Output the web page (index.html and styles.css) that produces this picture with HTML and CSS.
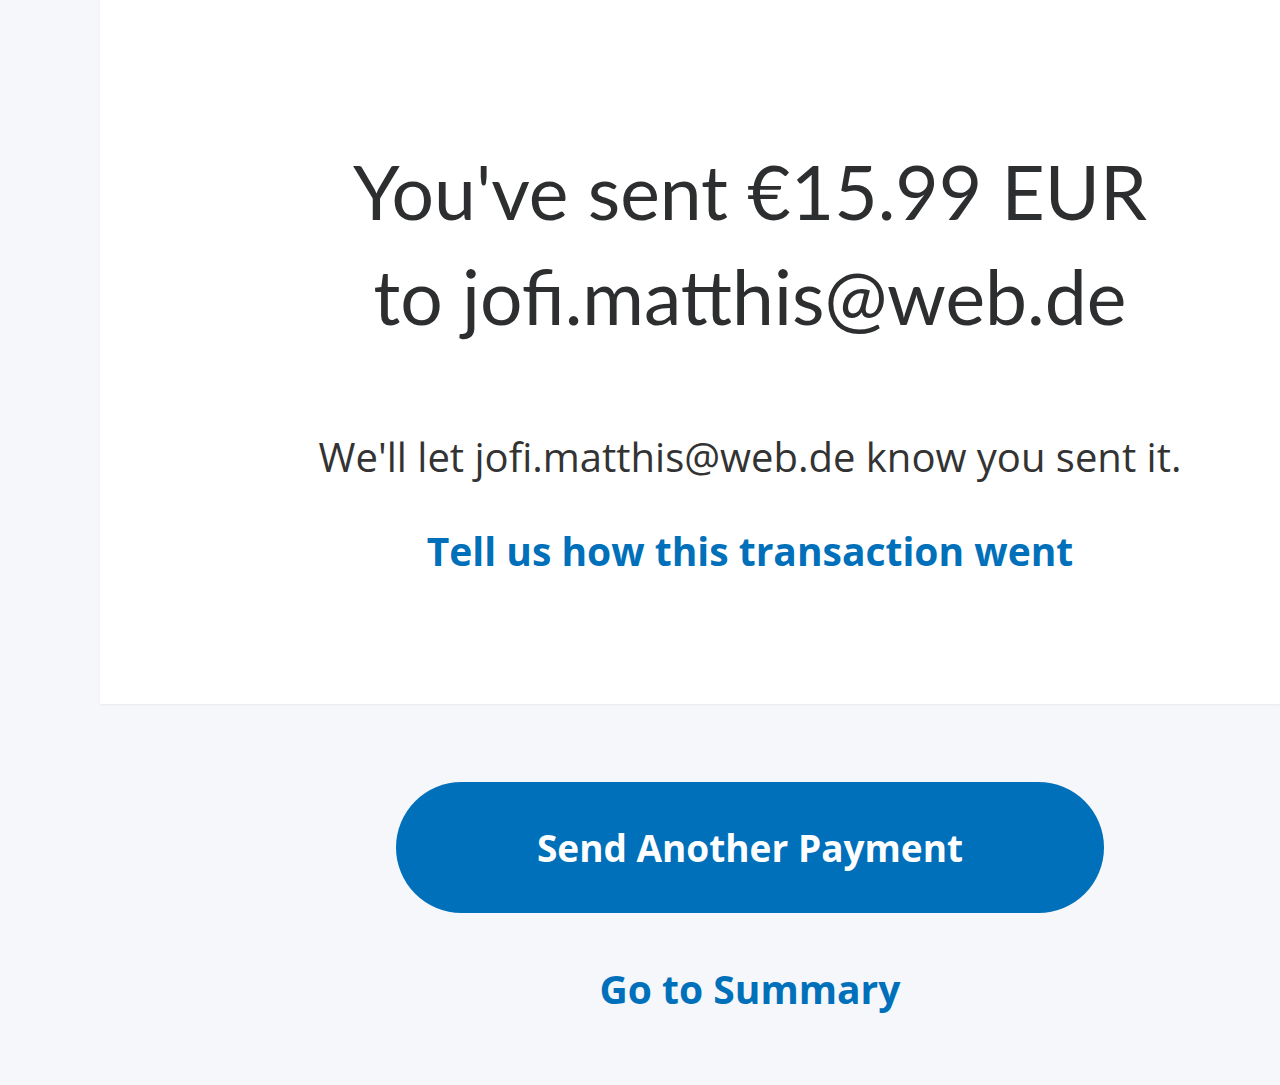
FILE: index.html
```html
<!DOCTYPE html>
<html lang="en">
<head>
<meta charset="utf-8">
<title>Payment sent</title>
<link rel="stylesheet" href="styles.css">
</head>
<body>
<main class="page">
  <section class="card">
    <h1 class="title">You've sent €15.99 EUR<br>to jofi.matthis@web.de</h1>
    <p class="note">We'll let jofi.matthis@web.de know you sent it.</p>
    <a class="link feedback" href="#">Tell us how this transaction went</a>
  </section>
  <div class="actions">
    <a class="btn" href="#">Send Another Payment</a>
    <a class="link summary" href="#">Go to Summary</a>
  </div>
</main>
</body>
</html>
```
FILE: styles.css
```css
html, body {
  margin: 0;
  padding: 0;
  background: #f5f7fa;
  overflow: hidden;
}
body {
  font-family: Lato, "Open Sans", sans-serif;
  color: #2c2e2f;
  width: 1280px;
  height: 1085px;
}
.page {
  margin-left: 100px;
}
.card {
  background: #ffffff;
  box-shadow: 0 1px 2px rgba(0,0,0,0.06);
  padding: 139px 0 128px 120px;
  display: flex;
  flex-direction: column;
  align-items: center;
  text-align: center;
}
.title {
  margin: 0;
  font-weight: 400;
  font-size: 75px;
  line-height: 105px;
  color: #2c2e2f;
}
.note {
  margin: 83px 0 0;
  font-family: "Open Sans", sans-serif;
  font-size: 40px;
  line-height: 50px;
  color: #333333;
}
.link {
  font-family: "Open Sans", sans-serif;
  font-weight: 700;
  color: #0070ba;
  text-decoration: none;
}
.feedback {
  margin-top: 44px;
  font-size: 39px;
  line-height: 50px;
}
.actions {
  display: flex;
  flex-direction: column;
  align-items: center;
  padding: 78px 0 0 120px;
}
.btn {
  width: 708px;
  height: 131px;
  border-radius: 66px;
  background: #0070ba;
  color: #ffffff;
  font-family: "Open Sans", sans-serif;
  font-weight: 700;
  font-size: 37px;
  display: flex;
  align-items: center;
  justify-content: center;
  text-decoration: none;
}
.summary {
  margin-top: 51px;
  font-size: 39px;
  line-height: 50px;
}
```
